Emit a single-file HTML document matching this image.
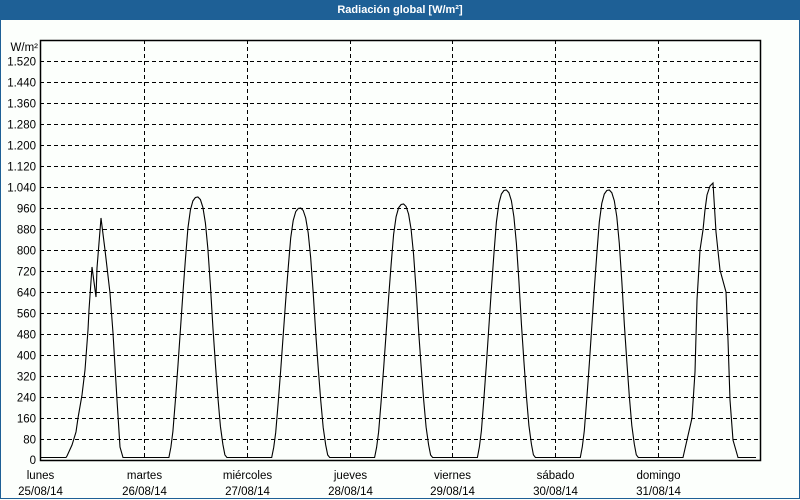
<!DOCTYPE html>
<html><head><meta charset="utf-8"><style>
body{margin:0;width:800px;height:500px;overflow:hidden;background:#fcfffc;font-family:"Liberation Sans",sans-serif}
#frame{position:absolute;left:0;top:0;width:798px;height:498px;border:1px solid #1e6096;border-top:none;}
#title{position:absolute;left:0;top:0;width:800px;height:20px;background:#1e6096;color:#fff;font-weight:bold;font-size:11px;line-height:20px;text-align:center}
</style></head><body>
<div id="frame"></div>
<div id="title">Radiación global [W/m²]</div>
<svg id="s" width="800" height="500" style="position:absolute;left:0;top:0" font-family="Liberation Sans, sans-serif" font-size="11.5"></svg>
<script>
var s=document.getElementById('s'),h='';
for(var i=1;i<=19;i++){var y=460-i*21+0.5;h+='<line x1="40" x2="760" y1="'+y+'" y2="'+y+'" stroke="#000" stroke-dasharray="4,3"/>';
var v=i*80;var t=v>=1000?(Math.floor(v/1000)+'.'+String(v%1000).padStart(3,'0')):v;
h+='<text x="36" y="'+(y+4)+'" text-anchor="end">'+t+'</text>';}
h+='<text x="36" y="464" text-anchor="end">0</text>';
h+='<text x="38" y="51" text-anchor="end">W/m²</text>';
var days=['lunes','martes','miércoles','jueves','viernes','sábado','domingo'];
var dates=['25/08/14','26/08/14','27/08/14','28/08/14','29/08/14','30/08/14','31/08/14'];
for(var d=0;d<7;d++){var x=Math.round(40+d*720/7)+(d?1:0)+0.5;
if(d)h+='<line x1="'+x+'" x2="'+x+'" y1="40" y2="460" stroke="#000" stroke-dasharray="4,3"/>';
h+='<text x="'+x+'" y="479" text-anchor="middle">'+days[d]+'</text><text x="'+x+'" y="495" text-anchor="middle">'+dates[d]+'</text>';}
h+='<rect x="40.5" y="40.5" width="720" height="420" fill="none" stroke="#000" stroke-width="1.5"/>';
var pts=[[40,457.5],[66,457.5],[67,456],[72,445],[76,432],[78,418],[82,395],[85,370],[88,330],[89,310],[92,267],[96,297],[97,268],[101,218],[105,250],[110,293],[113,333],[117,400],[120,447],[123,457.5]];
var sh=[[25,0],[27,0.04],[29,0.1],[31.5,0.22],[34,0.35],[36.5,0.49],[39,0.63],[41.5,0.76],[44,0.88],[46.5,0.95],[49,0.985],[51.5,0.998],[54,1],[56.5,0.99],[59,0.96],[61.5,0.9],[64,0.8],[66.5,0.66],[69,0.5],[71.5,0.36],[74,0.23],[76.5,0.12],[79,0.05],[81,0.01],[83,0]];
var peaks=[0,197,208,204,190,190];
for(var d=1;d<6;d++){var D=40+d*720/7+1;for(var k=0;k<sh.length;k++){pts.push([D+sh[k][0],457.5-(457.5-peaks[d])*sh[k][1]]);}}
pts=pts.concat([[683,457.5],[692,418],[695,372],[697,300],[700,250],[703,230],[705,210],[707,195],[710,186],[713,183],[716,232],[720,270],[726,292],[728,340],[730,400],[733,440],[738,457.5],[756,457.5]]);
h+='<polyline fill="none" stroke="#000" stroke-width="1.1" points="'+pts.map(function(p){return p[0].toFixed(1)+','+p[1].toFixed(1)}).join(' ')+'"/>';
s.innerHTML=h;
</script>
</body></html>
